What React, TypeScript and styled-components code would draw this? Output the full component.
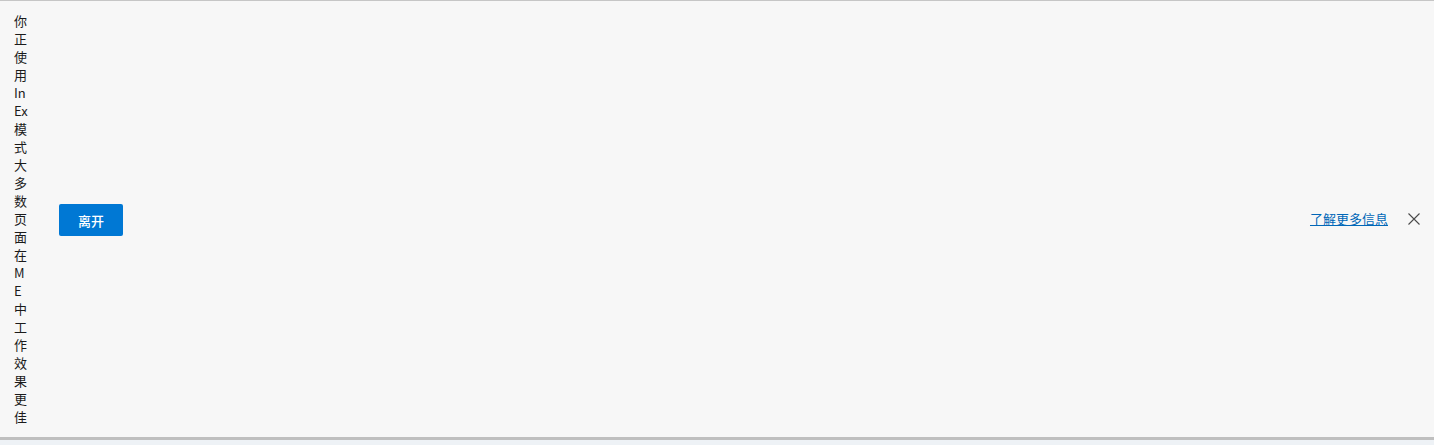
import React from 'react';
import styled, { createGlobalStyle } from 'styled-components';

const GlobalStyle = createGlobalStyle`
  html, body {
    margin: 0;
    padding: 0;
    background: #eef2f6;
  }
  body {
    font-family: "Noto Sans CJK SC", "Noto Sans", "Liberation Sans", sans-serif;
  }
`;

const messageLines = [
  '你', '正', '使', '用', 'In', 'Ex', '模', '式', '大', '多', '数', '页',
  '面', '在', 'M', 'E', '中', '工', '作', '效', '果', '更', '佳',
];

const CloseIcon = () => (
  <svg width="12" height="12" viewBox="0 0 12 12" fill="none">
    <path d="M0.5 0.5L11.5 11.5M11.5 0.5L0.5 11.5" stroke="#4a4a4a" strokeWidth="1.1" />
  </svg>
);

const App: React.FC = () => {
  return (
    <>
      <GlobalStyle />
      <InfoBar>
        <Message>
          {messageLines.map((line, i) => (
            <MessageLine key={i}>{line}</MessageLine>
          ))}
        </Message>
        <LeaveButton>离开</LeaveButton>
        <Spacer />
        <LearnMore href="#">了解更多信息</LearnMore>
        <CloseButton aria-label="关闭">
          <CloseIcon />
        </CloseButton>
      </InfoBar>
    </>
  );
};

const InfoBar = styled.div`
  display: flex;
  align-items: center;
  box-sizing: border-box;
  padding: 11px 8px 11px 14px;
  background: #f7f7f7;
  border-top: 1px solid #c6c6c6;
  border-bottom: 3px solid #bfbfbf;
`;

const Message = styled.div`
  display: flex;
  flex-direction: column;
  width: 45px;
  flex-shrink: 0;
  color: #1b1b1b;
`;

const MessageLine = styled.span`
  font-size: 13px;
  line-height: 18px;
  height: 18px;
`;

const LeaveButton = styled.button`
  width: 64px;
  height: 32px;
  margin-top: 2px;
  border: none;
  border-radius: 2px;
  background: #0078d4;
  color: #ffffff;
  font-family: inherit;
  font-size: 13px;
  font-weight: 500;
  cursor: pointer;
  padding: 0;
`;

const Spacer = styled.div`
  flex: 1;
`;

const LearnMore = styled.a`
  font-size: 13px;
  line-height: 18px;
  color: #0067b8;
  text-decoration: underline;
  margin-right: 14px;
`;

const CloseButton = styled.button`
  width: 24px;
  height: 24px;
  display: flex;
  align-items: center;
  justify-content: center;
  border: none;
  background: transparent;
  padding: 0;
  cursor: pointer;
`;

export default App;
